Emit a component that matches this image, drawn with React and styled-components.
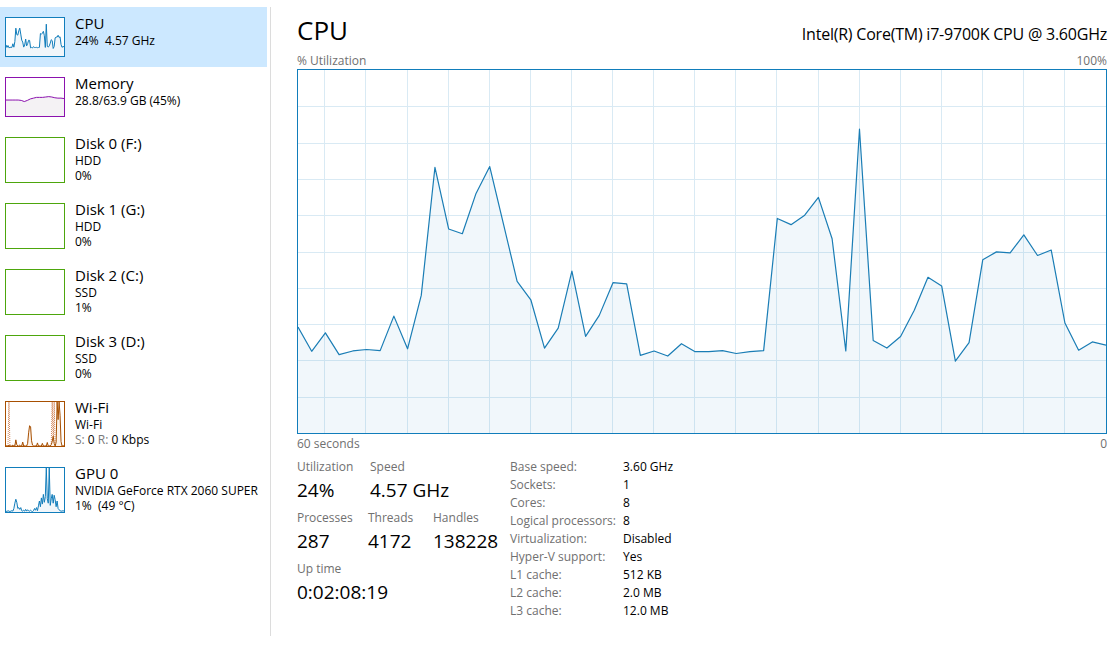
import React from 'react';
import styled, { createGlobalStyle } from 'styled-components';

const GlobalStyle = createGlobalStyle`
  html, body {
    margin: 0;
    padding: 0;
    background: #fff;
  }
  body {
    font-family: 'Open Sans', 'Noto Sans', sans-serif;
    color: #000;
  }
`;

const cpuData = [
  29.2, 22.5, 27.6, 21.6, 22.6, 23.0, 22.7, 32.2, 23.2, 37.9,
  73.2, 56.2, 54.9, 66.0, 73.4, 57.6, 41.8, 36.7, 23.4, 28.9,
  44.6, 26.6, 32.4, 41.4, 41.1, 21.4, 22.6, 21.2, 24.6, 22.4,
  22.4, 22.7, 21.9, 22.4, 22.7, 59.1, 57.4, 60.0, 64.9, 53.5,
  22.6, 83.7, 25.5, 23.4, 26.6, 33.8, 42.9, 40.5, 19.8, 24.9,
  47.7, 49.9, 49.6, 54.6, 48.9, 50.4, 30.3, 22.8, 25.1, 24.2,
];

const memData = [42, 42, 42, 42, 42, 41, 38, 41, 45, 47, 49, 49, 49, 50, 51, 50, 48, 47, 47, 46];

const wifiSend = [
  0, 0, 0, 2, 0, 0, 0, 2, 0, 0, 14, 3, 0, 0, 2, 0, 0, 9, 0, 0,
  0, 0, 6, 30, 46, 44, 12, 2, 0, 0, 0, 0, 7, 0, 0, 0, 0, 6, 0, 0,
  0, 0, 8, 0, 0, 0, 3, 10, 22, 6, 0, 8, 100, 60, 100, 70, 10, 0, 0, 0,
];

const wifiRecv = [
  0, 0, 0, 100, 0, 0, 0, 0, 0, 0, 10, 0, 0, 0, 0, 0, 0, 5, 0, 0,
  0, 0, 0, 20, 30, 20, 0, 0, 0, 0, 0, 0, 0, 0, 0, 0, 0, 0, 0, 0,
  0, 0, 0, 0, 0, 0, 0, 100, 0, 100, 0, 0, 0, 0, 0, 0, 0, 0, 0, 0,
];

const gpuData = [
  2, 1, 3, 2, 1, 2, 3, 2, 8, 20, 29, 22, 8, 10, 6, 10, 3, 2, 4, 2,
  6, 2, 5, 3, 2, 4, 2, 1, 3, 8, 4, 10, 3, 14, 25, 12, 32, 18, 40, 22,
  35, 100, 30, 20, 100, 15, 30, 40, 20, 38, 28, 12, 25, 8, 5, 3, 2, 2, 3, 2,
];

const Window = styled.div`
  display: flex;
  width: 1119px;
  height: 654px;
  overflow: hidden;
  font-family: 'Open Sans', 'Noto Sans', sans-serif;
`;

const Sidebar = styled.div`
  width: 267px;
  height: 629px;
  margin-top: 7px;
  padding-right: 3px;
  border-right: 1px solid #dcdcdc;
  flex-shrink: 0;
`;

const Item = styled.div`
  display: flex;
  align-items: flex-start;
  gap: 10px;
  height: ${(p) => p.$h}px;
  padding: 6px 0 0 5px;
  box-sizing: border-box;
  background: ${(p) => (p.$selected ? '#cce8ff' : 'transparent')};
`;

const Thumb = styled.div`
  width: 60px;
  height: ${(p) => p.$h}px;
  margin-top: 4px;
  border: 1px solid ${(p) => p.$color};
  box-sizing: border-box;
  background: #fff;
  flex-shrink: 0;

  svg {
    display: block;
  }
`;

const ItemText = styled.div`
  display: flex;
  flex-direction: column;
  white-space: nowrap;
`;

const ItemTitle = styled.div`
  font-size: 15px;
  line-height: 20px;
  color: #000;
`;

const ItemSub = styled.div`
  font-size: 12px;
  line-height: 15px;
  color: #000;
`;

const Dim = styled.span`
  color: #7a7a7a;
`;

const Main = styled.div`
  flex: 1;
  padding: 12px 12px 0 26px;
  min-width: 0;
`;

const Header = styled.div`
  display: flex;
  justify-content: space-between;
  align-items: baseline;
  height: 36px;
`;

const Title = styled.div`
  font-size: 26px;
  line-height: 36px;
  color: #000;
`;

const Model = styled.div`
  font-size: 16px;
  line-height: 22px;
  letter-spacing: -0.22px;
  color: #000;
`;

const AxisRow = styled.div`
  display: flex;
  justify-content: space-between;
  font-size: 12px;
  line-height: 16px;
  color: #707070;
  margin-top: ${(p) => p.$mt || 0}px;
`;

const ChartBox = styled.div`
  height: 365px;
  border: 1px solid #117dbb;
  box-sizing: border-box;
  background: #fff;

  svg {
    display: block;
  }
`;

const Stats = styled.div`
  display: flex;
  margin-top: 7px;
`;

const StatColumn = styled.div`
  width: 213px;
  flex-shrink: 0;
`;

const StatRow = styled.div`
  display: flex;
  margin-bottom: 7px;
`;

const StatBlock = styled.div`
  width: ${(p) => (p.$w ? `${p.$w}px` : 'auto')};
  white-space: nowrap;
`;

const StatLabel = styled.div`
  font-size: 12px;
  line-height: 16px;
  color: #707070;
`;

const StatValue = styled.div`
  font-size: 19px;
  line-height: 26px;
  margin-top: 2px;
  color: #000;
`;

const InfoTable = styled.div`
  display: grid;
  grid-template-columns: 113px auto;
  margin-top: -1px;
  font-size: 12px;
  line-height: 18px;
  white-space: nowrap;
`;

const InfoKey = styled.div`
  color: #707070;
`;

const InfoVal = styled.div`
  color: #000;
`;

function toPoints(data, w, h) {
  const step = w / (data.length - 1);
  return data
    .map((v, i) => `${(i * step).toFixed(2)},${(h - (v / 100) * h).toFixed(2)}`)
    .join(' ');
}

function Line({ data, w, h, color, fill, dashed, width = 1 }) {
  const pts = toPoints(data, w, h);
  return (
    <>
      {fill && <polygon points={`0,${h} ${pts} ${w},${h}`} fill={fill} />}
      <polyline
        points={pts}
        fill="none"
        stroke={color}
        strokeWidth={width}
        strokeDasharray={dashed ? '1 1' : undefined}
        strokeLinejoin="round"
      />
    </>
  );
}

function MiniGraph({ kind, h }) {
  const w = 58;
  const ih = h - 2;
  if (kind === 'cpu') {
    return (
      <svg width={w} height={ih}>
        <Line data={cpuData} w={w} h={ih} color="#117dbb" fill="#f1f6fa" />
      </svg>
    );
  }
  if (kind === 'memory') {
    return (
      <svg width={w} height={ih}>
        <Line data={memData} w={w} h={ih} color="#8b12ae" fill="#f4f2f4" />
      </svg>
    );
  }
  if (kind === 'wifi') {
    return (
      <svg width={w} height={ih}>
        <Line data={wifiRecv} w={w} h={ih} color="#d4875a" dashed />
        <Line data={wifiSend} w={w} h={ih} color="#a74f01" fill="#fcf3eb" />
      </svg>
    );
  }
  if (kind === 'gpu') {
    return (
      <svg width={w} height={ih}>
        <Line data={gpuData} w={w} h={ih} color="#117dbb" fill="#f1f6fa" />
      </svg>
    );
  }
  return null;
}

const devices = [
  { title: 'CPU', lines: ['24%\u00a0 4.57 GHz'], color: '#117dbb', kind: 'cpu', selected: true },
  { title: 'Memory', lines: ['28.8/63.9 GB (45%)'], color: '#8b12ae', kind: 'memory' },
  { title: 'Disk 0 (F:)', lines: ['HDD', '0%'], color: '#4da60c' },
  { title: 'Disk 1 (G:)', lines: ['HDD', '0%'], color: '#4da60c' },
  { title: 'Disk 2 (C:)', lines: ['SSD', '1%'], color: '#4da60c' },
  { title: 'Disk 3 (D:)', lines: ['SSD', '0%'], color: '#4da60c' },
  {
    title: 'Wi-Fi',
    lines: ['Wi-Fi', <><Dim>S:</Dim> 0 <Dim>R:</Dim> 0 Kbps</>],
    color: '#a74f01',
    kind: 'wifi',
  },
  {
    title: 'GPU 0',
    lines: ['NVIDIA GeForce RTX 2060 SUPER', '1%\u00a0 (49 °C)'],
    color: '#117dbb',
    kind: 'gpu',
  },
];

const specs = [
  ['Base speed:', '3.60 GHz'],
  ['Sockets:', '1'],
  ['Cores:', '8'],
  ['Logical processors:', '8'],
  ['Virtualization:', 'Disabled'],
  ['Hyper-V support:', 'Yes'],
  ['L1 cache:', '512 KB'],
  ['L2 cache:', '2.0 MB'],
  ['L3 cache:', '12.0 MB'],
];

const CHART_W = 808;
const CHART_H = 363;

function UsageChart() {
  const rows = [];
  for (let k = 1; k < 10; k++) {
    const y = Math.round((k * CHART_H) / 10) + 0.5;
    rows.push(<line key={`h${k}`} x1="0" x2={CHART_W} y1={y} y2={y} stroke="#d9eaf4" />);
  }
  const cols = [];
  for (let k = 0; k < 19; k++) {
    const x = Math.round(26.3 + k * 41.1) + 0.5;
    cols.push(<line key={`v${k}`} x1={x} x2={x} y1="0" y2={CHART_H} stroke="#d9eaf4" />);
  }
  return (
    <ChartBox>
      <svg width={CHART_W} height={CHART_H}>
        {rows}
        {cols}
        <Line data={cpuData} w={CHART_W} h={CHART_H} color="#1a7db5" fill="rgba(17,125,187,0.06)" width={1.2} />
      </svg>
    </ChartBox>
  );
}

export default function App() {
  return (
    <Window>
      <GlobalStyle />
      <Sidebar>
        {devices.map((d) => {
          const h = d.lines.length > 1 ? 66 : 60;
          return (
            <Item key={d.title} $h={h} $selected={d.selected}>
              <Thumb $h={h - 20} $color={d.color}>
                <MiniGraph kind={d.kind} h={h - 20} />
              </Thumb>
              <ItemText>
                <ItemTitle>{d.title}</ItemTitle>
                {d.lines.map((l, i) => (
                  <ItemSub key={i}>{l}</ItemSub>
                ))}
              </ItemText>
            </Item>
          );
        })}
      </Sidebar>

      <Main>
        <Header>
          <Title>CPU</Title>
          <Model>Intel(R) Core(TM) i7-9700K CPU @ 3.60GHz</Model>
        </Header>
        <AxisRow $mt={5}>
          <span>% Utilization</span>
          <span>100%</span>
        </AxisRow>
        <UsageChart />
        <AxisRow $mt={2}>
          <span>60 seconds</span>
          <span>0</span>
        </AxisRow>

        <Stats>
          <StatColumn>
            <StatRow>
              <StatBlock $w={73}>
                <StatLabel>Utilization</StatLabel>
                <StatValue>24%</StatValue>
              </StatBlock>
              <StatBlock>
                <StatLabel>Speed</StatLabel>
                <StatValue>4.57 GHz</StatValue>
              </StatBlock>
            </StatRow>
            <StatRow>
              <StatBlock $w={71}>
                <StatLabel>Processes</StatLabel>
                <StatValue>287</StatValue>
              </StatBlock>
              <StatBlock $w={65}>
                <StatLabel>Threads</StatLabel>
                <StatValue>4172</StatValue>
              </StatBlock>
              <StatBlock>
                <StatLabel>Handles</StatLabel>
                <StatValue>138228</StatValue>
              </StatBlock>
            </StatRow>
            <StatRow>
              <StatBlock>
                <StatLabel>Up time</StatLabel>
                <StatValue>0:02:08:19</StatValue>
              </StatBlock>
            </StatRow>
          </StatColumn>

          <InfoTable>
            {specs.map(([k, v]) => (
              <React.Fragment key={k}>
                <InfoKey>{k}</InfoKey>
                <InfoVal>{v}</InfoVal>
              </React.Fragment>
            ))}
          </InfoTable>
        </Stats>
      </Main>
    </Window>
  );
}
